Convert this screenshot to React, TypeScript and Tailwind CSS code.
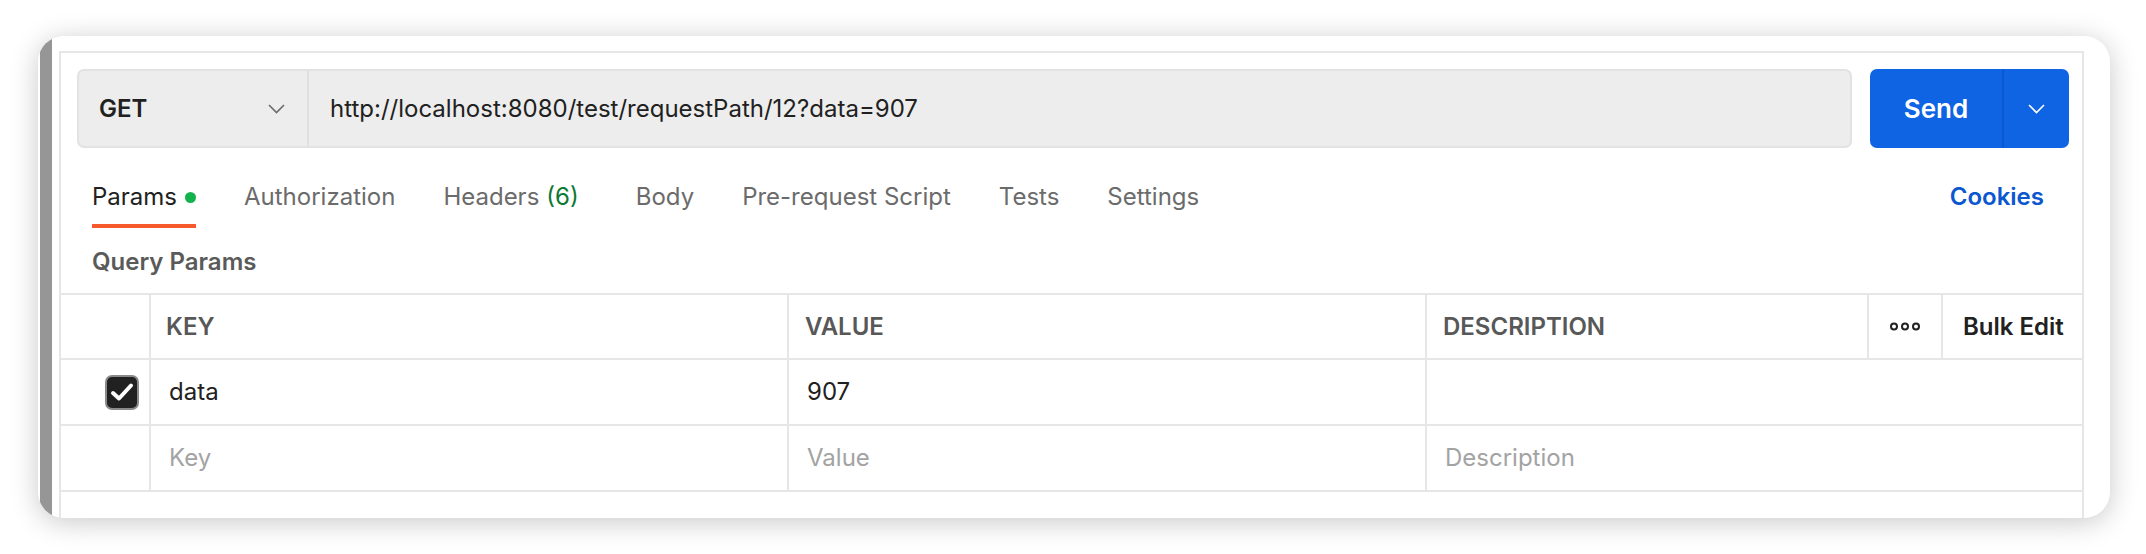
import { ReactNode } from "react";

function Chevron({ className }: { className?: string }) {
  return (
    <svg width="17" height="10" viewBox="0 0 17 10" fill="none" className={className}>
      <polyline points="1,1 8.5,8.5 16,1" stroke="currentColor" strokeWidth="1.6" />
    </svg>
  );
}

function Tab({ children, active }: { children: ReactNode; active?: boolean }) {
  return (
    <div
      className={
        active
          ? "flex items-center h-[47px] pb-[11px] border-b-4 border-[#f65a2c] text-[#212121]"
          : "flex items-center h-[47px] pb-[11px] border-b-4 border-transparent text-[#6b6b6b]"
      }
    >
      {children}
    </div>
  );
}

export default function App() {
  const font = { fontFamily: "Inter, 'Noto Sans', sans-serif" };

  return (
    <div className="w-[2146px] h-[554px] bg-white pt-[36px] pl-[38px]" style={font}>
      <div className="flex w-[2072px] h-[482px] bg-white rounded-[26px] overflow-hidden shadow-[0_4px_28px_rgba(0,0,0,0.22)]">
        {/* sidebar edge */}
        <div className="ml-[2px] w-[12px] bg-[#969696]" />

        <div className="ml-[7px] mt-[15px] w-[2025px] border-l-2 border-t-2 border-r-2 border-[#e6e6e6] flex flex-col">
          {/* url bar */}
          <div className="flex pt-[16px] pl-[16px] pr-[13px]">
            <div className="flex flex-1 h-[79px] bg-[#ededed] border-2 border-[#e2e2e2] rounded-[7px]">
              <div className="flex items-center w-[230px] pl-[20px] pr-[22px] border-r-2 border-[#e0e0e0]">
                <span className="text-[24px] font-semibold text-[#212121]">GET</span>
                <Chevron className="ml-auto text-[#6b6b6b]" />
              </div>
              <div className="flex items-center pl-[21px] text-[24px] text-[#212121]">
                http://localhost:8080/test/requestPath/12?data=907
              </div>
            </div>
            <div className="flex ml-[18px] w-[199px] h-[79px] bg-[#0f64e4] rounded-[7px] text-white">
              <div className="flex items-center justify-center w-[134px] border-r-2 border-[#0c59cd] text-[26px] font-semibold">
                Send
              </div>
              <div className="flex flex-1 items-center justify-center">
                <Chevron />
              </div>
            </div>
          </div>

          {/* tabs */}
          <div className="flex mt-[33px] pl-[31px] pr-[38px] text-[24px]">
            <div className="flex gap-[48px]">
              <Tab active>
                Params
                <span className="ml-[8px] w-[11px] h-[11px] rounded-full bg-[#13b24c]" />
              </Tab>
              <Tab>Authorization</Tab>
              <Tab>
                Headers <span className="ml-[7px] mr-[9px] text-[#0b7a31]">(6)</span>
              </Tab>
              <Tab>Body</Tab>
              <Tab>Pre-request Script</Tab>
              <Tab>Tests</Tab>
              <Tab>Settings</Tab>
            </div>
            <div className="ml-auto flex items-center h-[47px] pb-[15px] font-semibold text-[#0b57d0]">Cookies</div>
          </div>

          <div className="mt-[19px] pl-[31px] text-[24px] font-semibold text-[#5a5a5a] leading-[30px]">Query Params</div>

          {/* params table */}
          <div className="mt-[16px] border-t-2 border-[#e6e6e6] text-[24px]">
            <div className="flex h-[65px] border-b-2 border-[#e6e6e6] font-semibold text-[#585858]">
              <div className="w-[90px] border-r-2 border-[#e6e6e6]" />
              <div className="flex items-center w-[638px] pl-[15px] border-r-2 border-[#e6e6e6]">KEY</div>
              <div className="flex items-center w-[638px] pl-[16px] border-r-2 border-[#e6e6e6]">VALUE</div>
              <div className="flex items-center w-[442px] pl-[16px] border-r-2 border-[#e6e6e6]">DESCRIPTION</div>
              <div className="flex items-center justify-center w-[74px] border-r-2 border-[#e6e6e6] text-[#212121]">
                <svg width="30" height="9" viewBox="0 0 30 9" fill="none">
                  <circle cx="4" cy="4.5" r="3" stroke="currentColor" strokeWidth="2" />
                  <circle cx="15" cy="4.5" r="3" stroke="currentColor" strokeWidth="2" />
                  <circle cx="26" cy="4.5" r="3" stroke="currentColor" strokeWidth="2" />
                </svg>
              </div>
              <div className="flex items-center flex-1 pl-[20px] text-[#212121]">Bulk Edit</div>
            </div>

            <div className="flex h-[66px] border-b-2 border-[#e6e6e6] text-[#212121]">
              <div className="flex items-center w-[90px] pl-[44px] border-r-2 border-[#e6e6e6]">
                <div className="flex items-center justify-center w-[34px] h-[35px] rounded-[7px] bg-[#212121] border-2 border-[#8a8a8a]">
                  <svg width="24" height="20" viewBox="0 0 24 20" fill="none">
                    <polyline points="3,11 9,16.5 21,3.5" stroke="white" strokeWidth="4" strokeLinecap="round" strokeLinejoin="round" />
                  </svg>
                </div>
              </div>
              <div className="flex items-center w-[638px] pl-[18px] border-r-2 border-[#e6e6e6]">data</div>
              <div className="flex items-center w-[638px] pl-[18px] border-r-2 border-[#e6e6e6]">907</div>
              <div className="flex-1" />
            </div>

            <div className="flex h-[66px] border-b-2 border-[#e6e6e6] text-[#a3a3a3]">
              <div className="w-[90px] border-r-2 border-[#e6e6e6]" />
              <div className="flex items-center w-[638px] pl-[18px] border-r-2 border-[#e6e6e6]">Key</div>
              <div className="flex items-center w-[638px] pl-[18px] border-r-2 border-[#e6e6e6]">Value</div>
              <div className="flex items-center flex-1 pl-[18px]">Description</div>
            </div>
          </div>
        </div>
      </div>
    </div>
  );
}
